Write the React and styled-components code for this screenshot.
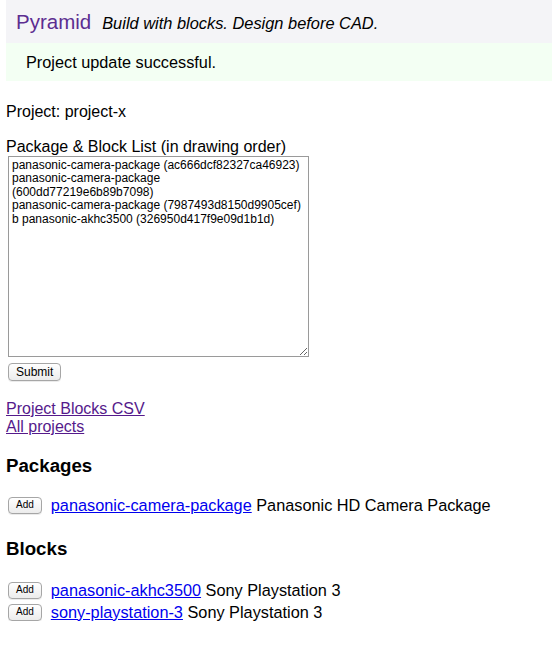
import React from "react";
import styled, { createGlobalStyle } from "styled-components";

const Global = createGlobalStyle`
  html, body { margin: 0; padding: 0; background: #fff; }
  body { font-family: "Liberation Sans", Arial, sans-serif; font-size: 16px; color: #000; }
`;

const Page = styled.div`
  padding: 0 0 0 6px;
`;

const Header = styled.header`
  background: #f4f4f7;
  height: 43px;
  display: flex;
  align-items: baseline;
  padding: 0 0 0 10px;
  gap: 11px;
  line-height: 43px;
`;

const Brand = styled.span`
  color: #5c2d91;
  font-size: 20.5px;
`;

const Tagline = styled.em`
  font-size: 16.4px;
`;

const Flash = styled.div`
  background: #f3fff3;
  height: 38px;
  line-height: 38px;
  padding-left: 20px;
  font-size: 16.3px;
`;

const Line = styled.p`
  margin: ${p => p.$mt || 0}px 0 0;
  line-height: 18px;
`;

const Form = styled.form`
  display: flex;
  flex-direction: column;
  align-items: flex-start;
`;

const Area = styled.textarea`
  margin: 0 0 0 2px;
  width: 301px;
  height: 201px;
  box-sizing: border-box;
  border: 1px solid #9a9a9a;
  padding: 2px 2px 2px 3px;
  font-family: "Liberation Sans", Arial, sans-serif;
  font-size: 12px;
  line-height: 13.4px;
  resize: both;
  color: #000;
`;

const Button = styled.button`
  font-family: "Liberation Sans", Arial, sans-serif;
  font-size: ${p => (p.$small ? 10 : 12)}px;
  height: ${p => (p.$small ? 17 : 18)}px;
  padding: 0 7px;
  border: 1px solid #a6a6a6;
  border-radius: 4px;
  background: linear-gradient(#ffffff, #ececec);
  color: #000;
  line-height: 1;
  box-shadow: 0 1px 0 rgba(0,0,0,0.08);
`;

const SubmitRow = styled.div`
  margin: 5px 0 0 2px;
`;

const Link = styled.a`
  color: ${p => (p.$visited ? "#551a8b" : "#0000ee")};
  text-decoration: underline;
`;

const Links = styled.div`
  margin-top: 19px;
  display: flex;
  flex-direction: column;
  line-height: 18px;
`;

const Heading = styled.h3`
  font-size: 18.7px;
  font-weight: bold;
  margin: ${p => p.$mt}px 0 0;
  line-height: 22px;
`;

const List = styled.div`
  margin-top: ${p => p.$mt}px;
  display: flex;
  flex-direction: column;
  gap: 4px;
`;

const Row = styled.div`
  display: flex;
  align-items: center;
  gap: 9px;
  padding-left: 2px;
  height: 18px;
  font-size: 16.3px;
`;

const Desc = styled.span``;

export default function App() {
  const text = [
    "panasonic-camera-package (ac666dcf82327ca46923)",
    "panasonic-camera-package",
    "(600dd77219e6b89b7098)",
    "panasonic-camera-package (7987493d8150d9905cef)",
    "b panasonic-akhc3500 (326950d417f9e09d1b1d)",
  ].join("\n");
  return (
    <Page>
      <Global />
      <Header>
        <Brand>Pyramid</Brand>
        <Tagline>Build with blocks. Design before CAD.</Tagline>
      </Header>
      <Flash>Project update successful.</Flash>
      <Line $mt={22}>Project: project-x</Line>
      <Line $mt={17}>Package &amp; Block List (in drawing order)</Line>
      <Form onSubmit={e => e.preventDefault()}>
        <Area defaultValue={text} />
        <SubmitRow>
          <Button type="submit">Submit</Button>
        </SubmitRow>
      </Form>
      <Links>
        <Link $visited href="#">Project Blocks CSV</Link>
        <Link $visited href="#">All projects</Link>
      </Links>
      <Heading $mt={19}>Packages</Heading>
      <List $mt={19}>
        <Row>
          <Button $small>Add</Button>
          <span>
            <Link href="#">panasonic-camera-package</Link> <Desc>Panasonic HD Camera Package</Desc>
          </span>
        </Row>
      </List>
      <Heading $mt={24}>Blocks</Heading>
      <List $mt={21}>
        <Row>
          <Button $small>Add</Button>
          <span>
            <Link href="#">panasonic-akhc3500</Link> <Desc>Sony Playstation 3</Desc>
          </span>
        </Row>
        <Row>
          <Button $small>Add</Button>
          <span>
            <Link href="#">sony-playstation-3</Link> <Desc>Sony Playstation 3</Desc>
          </span>
        </Row>
      </List>
    </Page>
  );
}
